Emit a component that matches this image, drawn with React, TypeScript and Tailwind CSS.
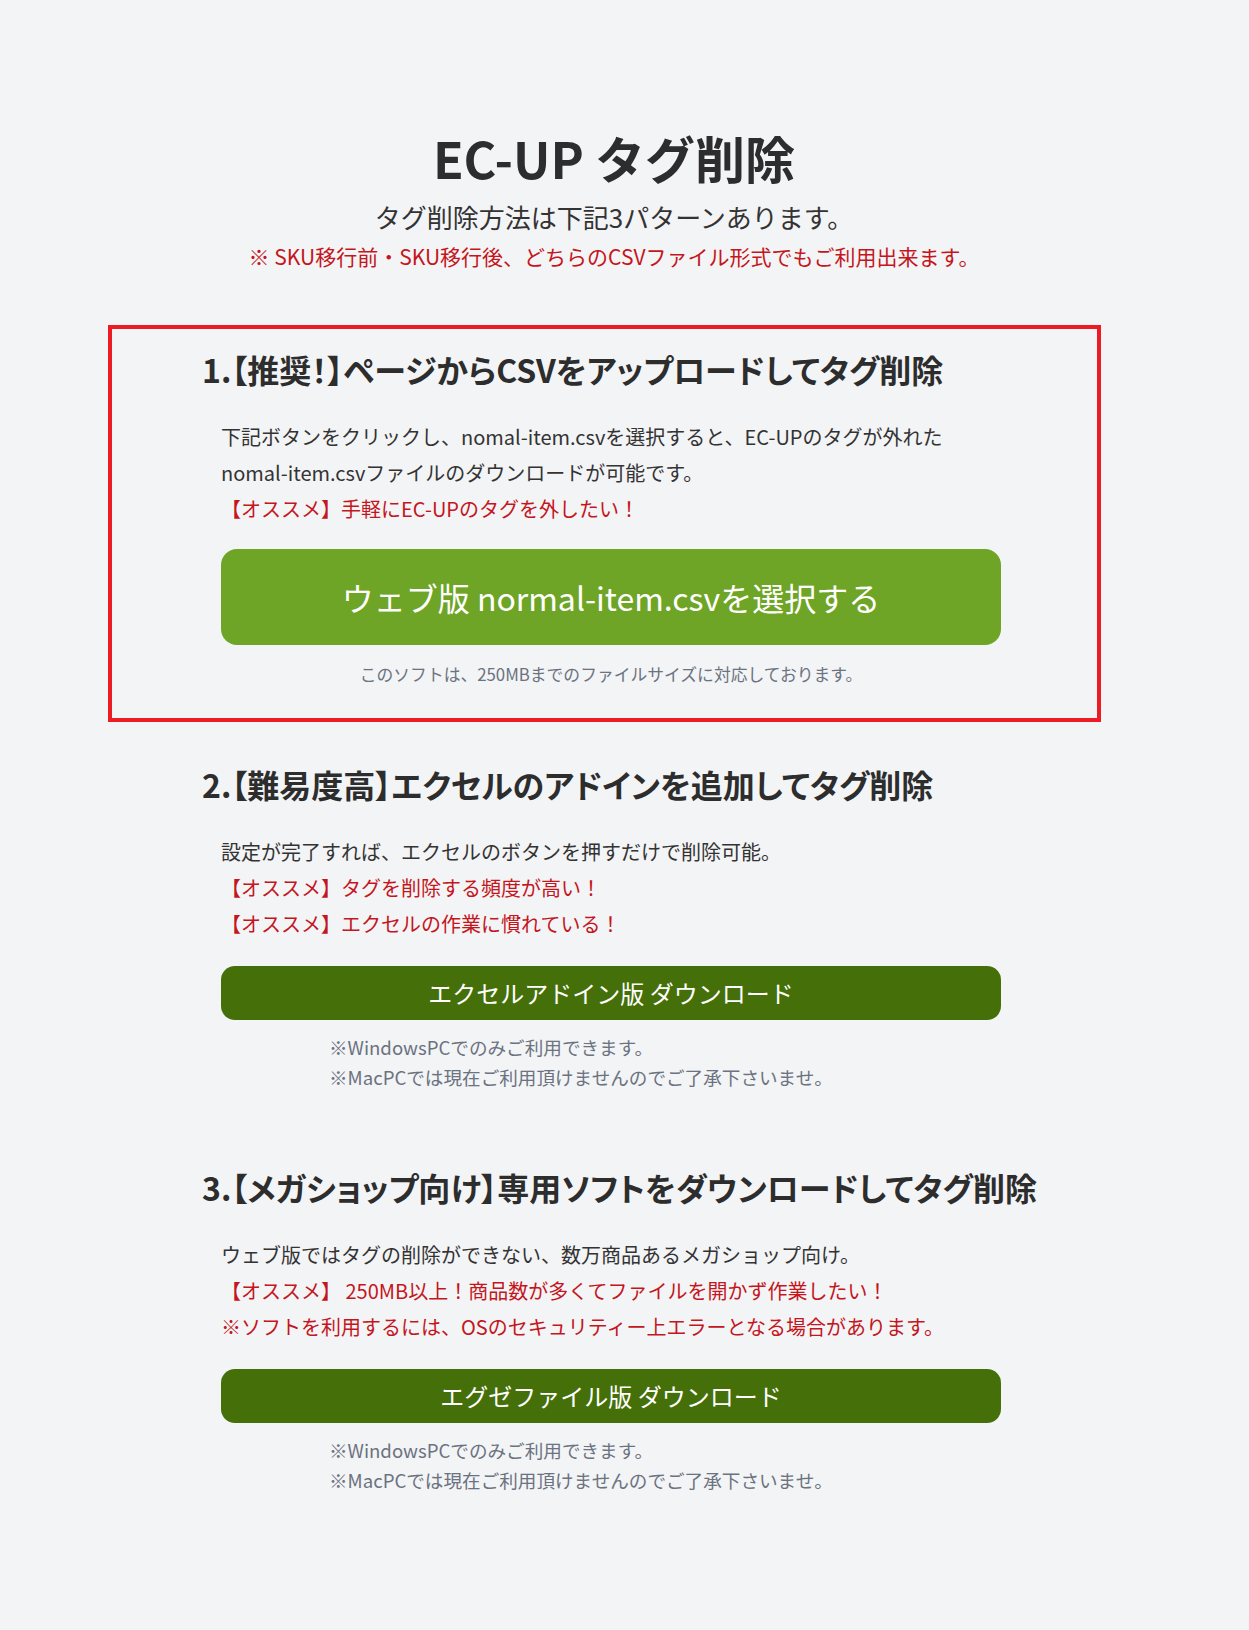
import React from "react";

type Line = { text: string; red?: boolean };

type Method = {
  title: string;
  lines: Line[];
  button: string;
  big?: boolean;
  notes: string[];
  centerNote?: boolean;
  highlight?: boolean;
};

const methods: Method[] = [
  {
    title: "1.【推奨！】ページからCSVをアップロードしてタグ削除",
    lines: [
      { text: "下記ボタンをクリックし、nomal-item.csvを選択すると、EC-UPのタグが外れた" },
      { text: "nomal-item.csvファイルのダウンロードが可能です。" },
      { text: "【オススメ】手軽にEC-UPのタグを外したい！", red: true },
    ],
    button: "ウェブ版 normal-item.csvを選択する",
    big: true,
    notes: ["このソフトは、250MBまでのファイルサイズに対応しております。"],
    centerNote: true,
    highlight: true,
  },
  {
    title: "2.【難易度高】エクセルのアドインを追加してタグ削除",
    lines: [
      { text: "設定が完了すれば、エクセルのボタンを押すだけで削除可能。" },
      { text: "【オススメ】タグを削除する頻度が高い！", red: true },
      { text: "【オススメ】エクセルの作業に慣れている！", red: true },
    ],
    button: "エクセルアドイン版 ダウンロード",
    notes: ["※WindowsPCでのみご利用できます。", "※MacPCでは現在ご利用頂けませんのでご了承下さいませ。"],
  },
  {
    title: "3.【メガショップ向け】専用ソフトをダウンロードしてタグ削除",
    lines: [
      { text: "ウェブ版ではタグの削除ができない、数万商品あるメガショップ向け。" },
      { text: "【オススメ】 250MB以上！商品数が多くてファイルを開かず作業したい！", red: true },
      { text: "※ソフトを利用するには、OSのセキュリティー上エラーとなる場合があります。", red: true },
    ],
    button: "エグゼファイル版 ダウンロード",
    notes: ["※WindowsPCでのみご利用できます。", "※MacPCでは現在ご利用頂けませんのでご了承下さいませ。"],
  },
];

const MethodSection = ({ m }: { m: Method }) => {
  return (
    <section
      className={
        m.highlight
          ? "border-4 border-[#ed1c24] pt-[18px] pb-[32px] pl-[90px] pr-[96px]"
          : "border-4 border-transparent pt-[18px] pb-[4px] pl-[90px] pr-[96px] mt-[18px]"
      }
    >
      <h2 className="text-[32px] leading-[45px] font-bold text-[#2d2d2d] whitespace-nowrap [font-feature-settings:'palt']">
        {m.title}
      </h2>
      <div className="pl-[19px] mt-[27px]">
        {m.lines.map((l, i) => (
          <p key={i} className={`text-[20px] leading-[36px] whitespace-nowrap ${l.red ? "text-[#c4161c]" : "text-[#333333]"}`}>
            {l.text}
          </p>
        ))}
        {m.big ? (
          <button className="mt-[22px] w-[780px] h-[96px] rounded-[16px] bg-[#6fa526] text-white text-[32px] flex items-center justify-center">
            {m.button}
          </button>
        ) : (
          <button className="mt-[24px] w-[780px] h-[54px] rounded-[14px] bg-[#456f09] text-white text-[24px] flex items-center justify-center">
            {m.button}
          </button>
        )}
        {m.centerNote ? (
          <p className="mt-[17px] w-[780px] text-center text-[16.8px] leading-[24px] text-[#6b7280]">{m.notes[0]}</p>
        ) : (
          <div className="mt-[12px] pl-[108px]">
            {m.notes.map((n, i) => (
              <p key={i} className="text-[18.6px] leading-[30px] text-[#6b7280]">
                {n}
              </p>
            ))}
          </div>
        )}
      </div>
    </section>
  );
};

export default function App() {
  return (
    <div className="min-h-screen bg-[#f3f4f6] font-['Noto_Sans_CJK_JP','Noto_Sans',sans-serif] pt-[126px] pb-[120px]">
      <div className="ml-[108px] w-[993px]">
        <header className="flex flex-col items-center pl-[19px]">
          <h1 className="text-[50px] leading-[62px] font-bold text-[#2d2d2d]">EC-UP タグ削除</h1>
          <p className="mt-[11px] text-[26px] leading-[36px] text-[#333333]">タグ削除方法は下記3パターンあります。</p>
          <p className="mt-[6px] text-[21px] leading-[30px] text-[#c4161c]">
            ※ SKU移行前・SKU移行後、どちらのCSVファイル形式でもご利用出来ます。
          </p>
        </header>
        <div className="mt-[54px]">
          {methods.map((m, i) => (
            <div key={i} className={i === 2 ? "mt-[43px]" : ""}>
              <MethodSection m={m} />
            </div>
          ))}
        </div>
      </div>
    </div>
  );
}
